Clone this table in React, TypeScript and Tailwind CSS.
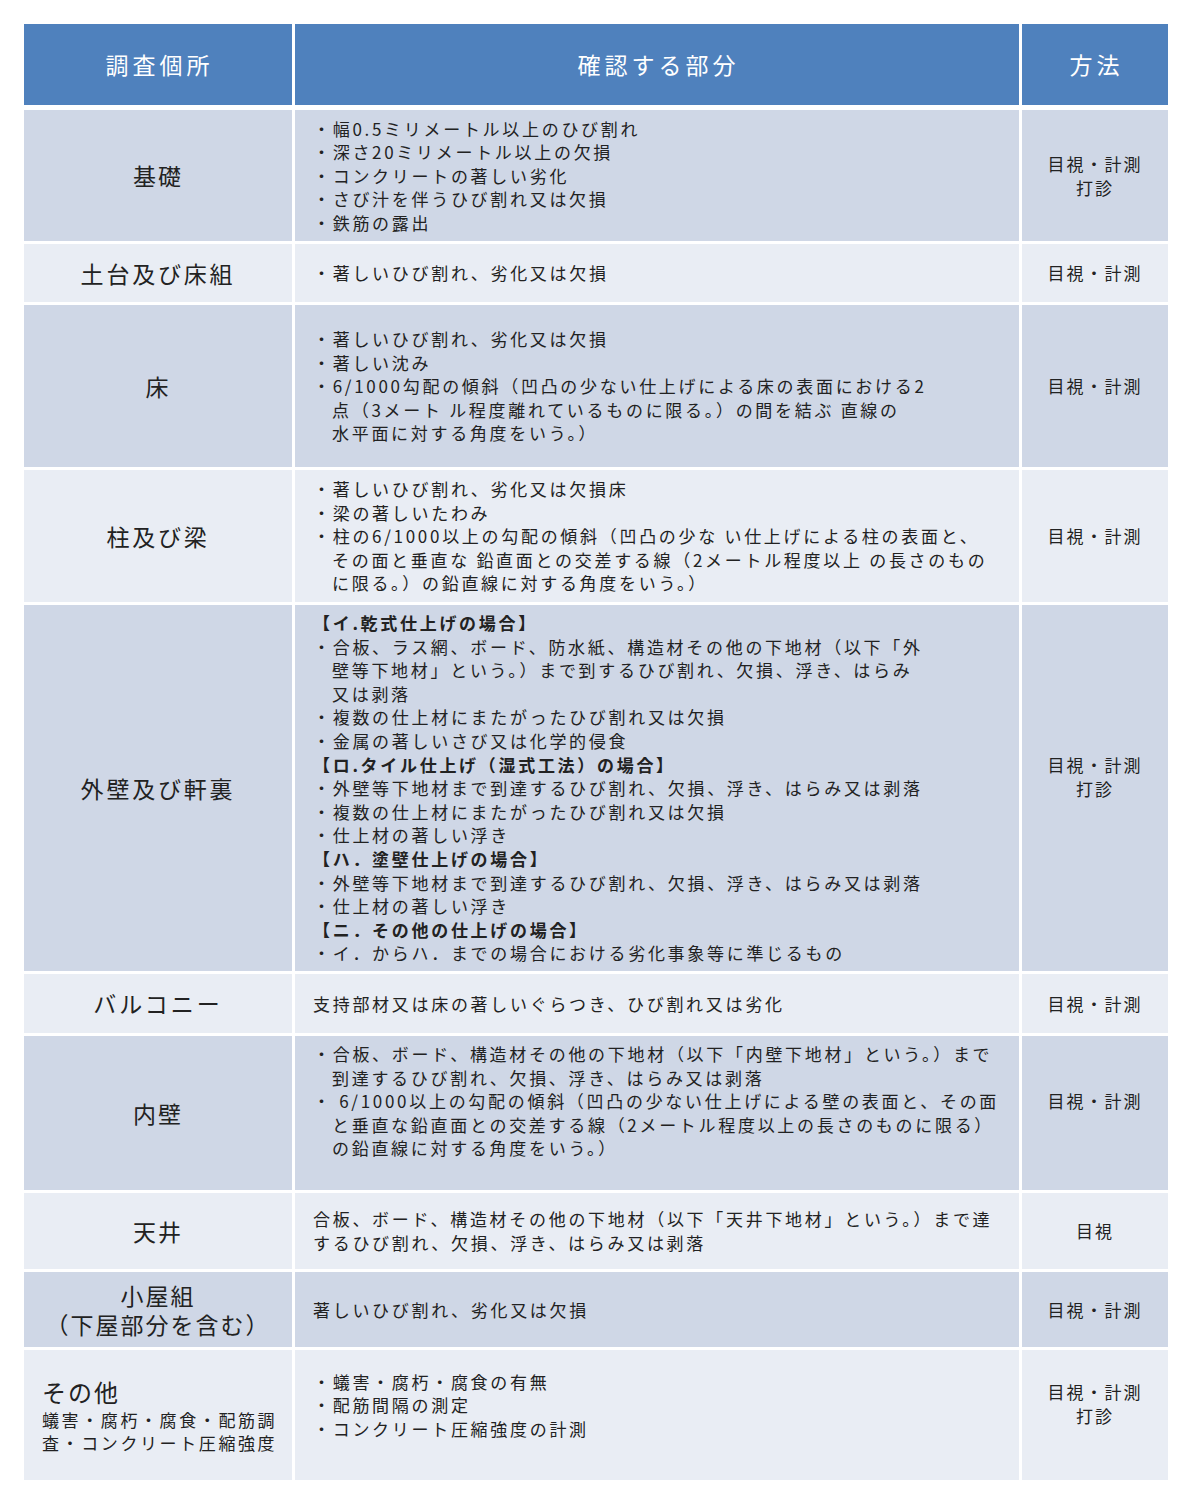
import React from "react";

type Line = { t: string; indent?: boolean; bold?: boolean };

type Row = {
  place: React.ReactNode;
  lines: Line[];
  method: string[];
  h: string;
  dark: boolean;
  bodyPad?: string;
  methodPad?: string;
};

const b = (t: string): Line => ({ t });
const i = (t: string): Line => ({ t, indent: true });
const h = (t: string): Line => ({ t, bold: true });

const rows: Row[] = [
  {
    place: <span className="text-[23px] tracking-[2px]">基礎</span>,
    lines: [
      b("・幅0.5ミリメートル以上のひび割れ"),
      b("・深さ20ミリメートル以上の欠損"),
      b("・コンクリートの著しい劣化"),
      b("・さび汁を伴うひび割れ又は欠損"),
      b("・鉄筋の露出"),
    ],
    method: ["目視・計測", "打診"],
    h: "h-[131px]",
    dark: true,
  },
  {
    place: <span className="text-[23px] tracking-[2.8px]">土台及び床組</span>,
    lines: [b("・著しいひび割れ、劣化又は欠損")],
    method: ["目視・計測"],
    h: "h-[58px]",
    dark: false,
  },
  {
    place: <span className="text-[23px] tracking-[2px]">床</span>,
    lines: [
      b("・著しいひび割れ、劣化又は欠損"),
      b("・著しい沈み"),
      b("・6/1000勾配の傾斜（凹凸の少ない仕上げによる床の表面における2"),
      i("点（3メート ル程度離れているものに限る。）の間を結ぶ 直線の"),
      i("水平面に対する角度をいう。）"),
    ],
    method: ["目視・計測"],
    h: "h-[162px]",
    dark: true,
  },
  {
    place: <span className="text-[23px] tracking-[2.8px]">柱及び梁</span>,
    lines: [
      b("・著しいひび割れ、劣化又は欠損床"),
      b("・梁の著しいたわみ"),
      b("・柱の6/1000以上の勾配の傾斜（凹凸の少な い仕上げによる柱の表面と、"),
      i("その面と垂直な 鉛直面との交差する線（2メートル程度以上 の長さのもの"),
      i("に限る。）の鉛直線に対する角度をいう。）"),
    ],
    method: ["目視・計測"],
    h: "h-[132px]",
    dark: false,
  },
  {
    place: <span className="text-[23px] tracking-[2.8px]">外壁及び軒裏</span>,
    lines: [
      h("【イ.乾式仕上げの場合】"),
      b("・合板、ラス網、ボード、防水紙、構造材その他の下地材（以下「外"),
      i("壁等下地材」という。）まで到するひび割れ、欠損、浮き、はらみ"),
      i("又は剥落"),
      b("・複数の仕上材にまたがったひび割れ又は欠損"),
      b("・金属の著しいさび又は化学的侵食"),
      h("【ロ.タイル仕上げ（湿式工法）の場合】"),
      b("・外壁等下地材まで到達するひび割れ、欠損、浮き、はらみ又は剥落"),
      b("・複数の仕上材にまたがったひび割れ又は欠損"),
      b("・仕上材の著しい浮き"),
      h("【ハ．塗壁仕上げの場合】"),
      b("・外壁等下地材まで到達するひび割れ、欠損、浮き、はらみ又は剥落"),
      b("・仕上材の著しい浮き"),
      h("【ニ．その他の仕上げの場合】"),
      b("・イ．からハ．までの場合における劣化事象等に準じるもの"),
    ],
    method: ["目視・計測", "打診"],
    h: "h-[366px]",
    dark: true,
    methodPad: "pb-[22px]",
  },
  {
    place: <span className="text-[23px] tracking-[3px]">バルコニー</span>,
    lines: [{ t: "支持部材又は床の著しいぐらつき、ひび割れ又は劣化" }],
    method: ["目視・計測"],
    h: "h-[59px]",
    dark: false,
  },
  {
    place: <span className="text-[23px] tracking-[2px]">内壁</span>,
    lines: [
      b("・合板、ボード、構造材その他の下地材（以下「内壁下地材」という。）まで"),
      i("到達するひび割れ、欠損、浮き、はらみ又は剥落"),
      b("・ 6/1000以上の勾配の傾斜（凹凸の少ない仕上げによる壁の表面と、その面"),
      i("と垂直な鉛直面との交差する線（2メートル程度以上の長さのものに限る）"),
      i("の鉛直線に対する角度をいう。）"),
    ],
    method: ["目視・計測"],
    h: "h-[154px]",
    dark: true,
    bodyPad: "pb-[24px]",
    methodPad: "pb-[24px]",
  },
  {
    place: <span className="text-[23px] tracking-[2px]">天井</span>,
    lines: [
      { t: "合板、ボード、構造材その他の下地材（以下「天井下地材」という。）まで達" },
      { t: "するひび割れ、欠損、浮き、はらみ又は剥落" },
    ],
    method: ["目視"],
    h: "h-[76px]",
    dark: false,
  },
  {
    place: (
      <div className="flex flex-col items-center text-[23px] leading-[29px] tracking-[2px]">
        <span>小屋組</span>
        <span>（下屋部分を含む）</span>
      </div>
    ),
    lines: [{ t: "著しいひび割れ、劣化又は欠損" }],
    method: ["目視・計測"],
    h: "h-[75px]",
    dark: true,
  },
  {
    place: (
      <div className="flex w-full flex-col items-start pl-[18px]">
        <span className="text-[24px] leading-[32px] tracking-[2px]">その他</span>
        <span className="text-[17px] leading-[23px] tracking-[2.6px]">蟻害・腐朽・腐食・配筋調</span>
        <span className="text-[17px] leading-[23px] tracking-[2.6px]">査・コンクリート圧縮強度</span>
      </div>
    ),
    lines: [
      b("・蟻害・腐朽・腐食の有無"),
      b("・配筋間隔の測定"),
      b("・コンクリート圧縮強度の計測"),
    ],
    method: ["目視・計測", "打診"],
    h: "h-[130px]",
    dark: false,
    bodyPad: "pb-[20px]",
    methodPad: "pb-[22px]",
  },
];

export default function App() {
  return (
    <div
      className="min-h-[1500px] w-[1191px] bg-white px-[24px] pt-[24px] text-[#222]"
      style={{ fontFamily: '"Noto Sans CJK JP", "Noto Sans", sans-serif' }}
    >
      <div className="flex w-[1144px] flex-col">
        <div className="grid h-[81px] grid-cols-[268px_724px_146px] gap-x-[3px] text-white">
          <div className="flex items-center justify-center bg-[#4f81bd] pl-[3px] text-[23px] tracking-[4px]">調査個所</div>
          <div className="flex items-center justify-center bg-[#4f81bd] pl-[3px] text-[23px] tracking-[4px]">確認する部分</div>
          <div className="flex items-center justify-center bg-[#4f81bd] pl-[3px] text-[23px] tracking-[4px]">方法</div>
        </div>
        <div className="mt-[5px] flex flex-col gap-y-[3px]">
          {rows.map((r, idx) => {
            const bg = r.dark ? "bg-[#cfd7e6]" : "bg-[#e9edf4]";
            return (
              <div key={idx} className={`grid grid-cols-[268px_724px_146px] gap-x-[3px] ${r.h}`}>
                <div className={`flex items-center justify-center ${bg}`}>{r.place}</div>
                <div
                  className={`flex flex-col justify-center pl-[18px] text-[17px] leading-[23.6px] tracking-[2.7px] ${bg} ${r.bodyPad ?? ""}`}
                >
                  {r.lines.map((l, j) => (
                    <div
                      key={j}
                      className={`whitespace-nowrap ${l.indent ? "pl-[19px]" : ""} ${l.bold ? "font-bold" : ""}`}
                    >
                      {l.t}
                    </div>
                  ))}
                </div>
                <div
                  className={`flex flex-col items-center justify-center text-[17px] leading-[23.6px] tracking-[2px] ${bg} ${r.methodPad ?? ""}`}
                >
                  {r.method.map((m, j) => (
                    <span key={j}>{m}</span>
                  ))}
                </div>
              </div>
            );
          })}
        </div>
      </div>
    </div>
  );
}
